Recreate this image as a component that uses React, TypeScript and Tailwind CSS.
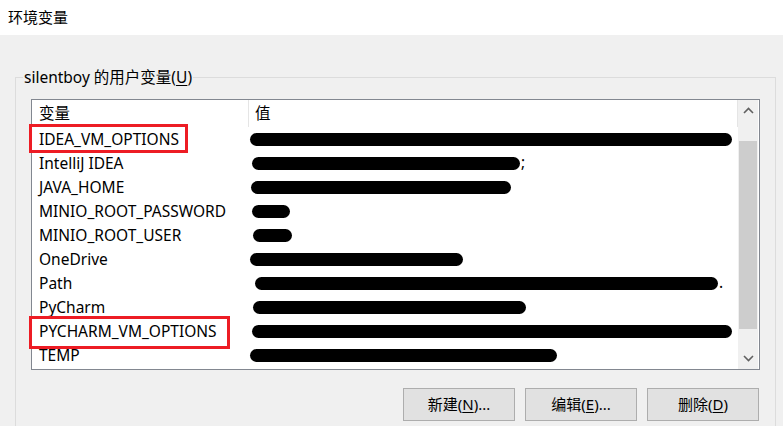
import React from 'react';

type Row = { name: string; bar: number; off?: number; tail?: string; mark?: 'short' | 'long' };

const rows: Row[] = [
  { name: 'IDEA_VM_OPTIONS', bar: 482, off: 0, mark: 'short' },
  { name: 'IntelliJ IDEA', bar: 268, off: 2, tail: ';' },
  { name: 'JAVA_HOME', bar: 260, off: 1 },
  { name: 'MINIO_ROOT_PASSWORD', bar: 38, off: 2 },
  { name: 'MINIO_ROOT_USER', bar: 39, off: 3 },
  { name: 'OneDrive', bar: 213, off: 0 },
  { name: 'Path', bar: 463, off: 5, tail: '.' },
  { name: 'PyCharm', bar: 273, off: 3 },
  { name: 'PYCHARM_VM_OPTIONS', bar: 480, off: 2, mark: 'long' },
  { name: 'TEMP', bar: 307, off: 0 },
];

const font = { fontFamily: '"Noto Sans", "Noto Sans CJK SC", sans-serif' };

const Btn: React.FC<{ label: string; hot: string; dots?: boolean }> = ({ label, hot, dots }) => (
  <button className="w-[112px] h-[33px] bg-[#e1e1e1] border border-[#adadad] text-[15px] text-black flex items-center justify-center">
    {label}(<span className="underline underline-offset-2">{hot}</span>){dots ? '...' : ''}
  </button>
);

export default function App() {
  return (
    <div className="w-[783px] h-[432px] bg-white flex flex-col text-black" style={font}>
      {/* title bar */}
      <div className="h-[35px] bg-white flex items-center pl-[8px] text-[15px]">环境变量</div>

      <div className="h-[391px] bg-[#f0f0f0] pt-[32px] pl-[15px]">
        <fieldset className="w-[761px] h-[359px] border border-b-0 border-[#dcdcdc] p-0 m-0">
          <legend className="ml-[7px] px-[1px] text-[15.5px] leading-[20px]">
            silentboy 的用户变量(<span className="underline underline-offset-2">U</span>)
          </legend>

          {/* list view */}
          <div className="mt-[12px] ml-[15px] w-[729px] h-[271px] border border-[#828790] bg-white flex text-[15.5px]">
            <div className="flex-1 flex flex-col">
              <div className="h-[27px] flex items-stretch">
                <div className="w-[217px] pl-[7px] flex items-center border-r border-[#e5e5e5]">变量</div>
                <div className="flex-1 pl-[6px] flex items-center border-r border-[#e5e5e5]">值</div>
              </div>
              {rows.map((r) => (
                <div key={r.name} className="h-[24px] flex items-center">
                  <div className="w-[218px] pl-[7px] relative whitespace-nowrap leading-[24px]">
                    {r.name}
                    {r.mark === 'short' && (
                      <div className="absolute left-[-3px] top-[-3px] w-[159px] h-[29px] border-[3px] border-[#ed1c24]" />
                    )}
                    {r.mark === 'long' && (
                      <div className="absolute left-[-3px] top-[-3px] w-[201px] h-[33px] border-[3px] border-[#ed1c24]" />
                    )}
                  </div>
                  <div className="flex items-center">
                    <div
                      className="h-[13px] bg-black rounded-full"
                      style={{ width: r.bar, marginLeft: r.off }}
                    />
                    {r.tail && <span className="ml-[1px]">{r.tail}</span>}
                  </div>
                </div>
              ))}
            </div>

            {/* scrollbar */}
            <div className="w-[20px] mr-[1px] bg-[#f0f0f0] flex flex-col">
              <div className="h-[21px] flex items-center justify-center">
                <svg width="11" height="7" viewBox="0 0 11 7">
                  <path d="M1 6 L5.5 1.5 L10 6" fill="none" stroke="#606060" strokeWidth="1.6" />
                </svg>
              </div>
              <div className="h-[20px]" />
              <div className="mx-[1px] h-[188px] bg-[#cdcdcd]" />
              <div className="flex-1" />
              <div className="h-[21px] flex items-center justify-center">
                <svg width="11" height="7" viewBox="0 0 11 7">
                  <path d="M1 1 L5.5 5.5 L10 1" fill="none" stroke="#606060" strokeWidth="1.6" />
                </svg>
              </div>
            </div>
          </div>

          {/* buttons */}
          <div className="mt-[18px] w-[743px] flex justify-end gap-[10px]">
            <Btn label="新建" hot="N" dots />
            <Btn label="编辑" hot="E" dots />
            <Btn label="删除" hot="D" />
          </div>
        </fieldset>
      </div>
    </div>
  );
}
